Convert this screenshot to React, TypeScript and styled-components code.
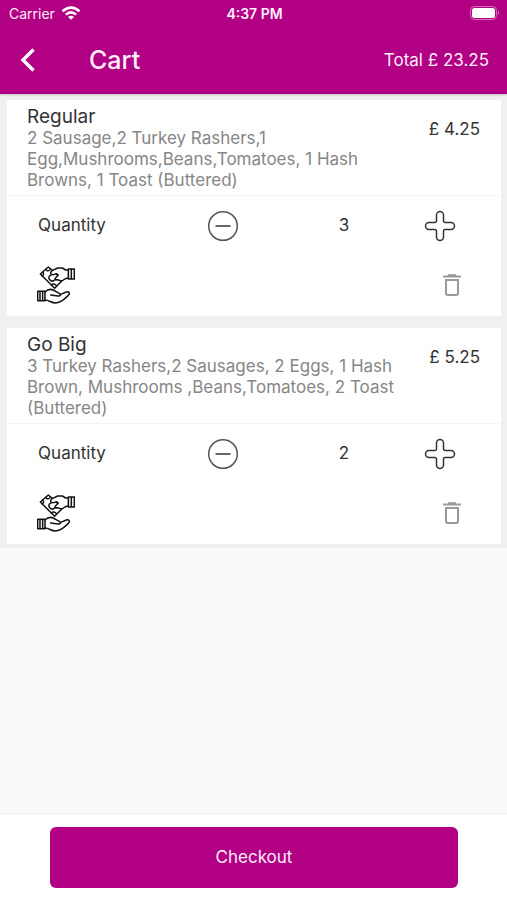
import React, { useState } from "react";
import styled, { createGlobalStyle } from "styled-components";

const brand = "#b10083";

const GlobalStyle = createGlobalStyle`
  * { box-sizing: border-box; }
  body {
    margin: 0;
    background: #fafafa;
    color: #333;
    font-family: Inter, "Liberation Sans", sans-serif;
    font-size: 17px;
  }
  button { font: inherit; color: inherit; }
`;

const Page = styled.div`
  min-height: 100vh;
  display: flex;
  flex-direction: column;
`;

const Header = styled.header`
  background: ${brand};
  color: #ffeefb;
  position: relative;
  box-shadow: 0 1px 2px rgba(0, 0, 0, 0.2);
`;

const StatusBar = styled.div`
  display: grid;
  grid-template-columns: 1fr auto 1fr;
  align-items: center;
  height: 28px;
  padding: 0 7px 2px 9px;
  font-size: 14px;
`;

const Carrier = styled.span`
  display: flex;
  align-items: center;
  gap: 6px;
`;

const Clock = styled.time`
  font-size: 14px;
  font-weight: 600;
`;

const BatteryIcon = styled.svg`
  justify-self: end;
`;

const NavBar = styled.div`
  display: flex;
  align-items: center;
  height: 66px;
  padding: 0 18px 3px 16px;
`;

const IconButton = styled.button`
  display: flex;
  align-items: center;
  justify-content: center;
  padding: 0;
  border: 0;
  background: none;
  cursor: pointer;
`;

const Title = styled.h1`
  flex: 1;
  margin: 0 0 0 49px;
  font-size: 25px;
  font-weight: 500;
`;

const Total = styled.span`
  font-size: 17px;
`;

const CartList = styled.main`
  display: flex;
  flex-direction: column;
  gap: 12px;
  padding: 6px 6px 4px 7px;
  background: #f0f0f0;
`;

const Card = styled.article`
  background: #fff;
`;

const CardTop = styled.div`
  display: flex;
  justify-content: space-between;
  gap: 16px;
  padding: 6px 21px 4px 20px;
  border-bottom: 1px solid #f4f4f4;
`;

const Details = styled.div`
  flex: 1;
  max-width: 380px;
`;

const ItemName = styled.h2`
  margin: 0;
  font-size: 19px;
  font-weight: 400;
  line-height: 22px;
`;

const Description = styled.p`
  margin: 0;
  color: #868686;
  font-size: 17px;
  line-height: 21px;
`;

const Price = styled.span`
  padding-top: 13px;
  line-height: 21px;
`;

const QuantityRow = styled.div`
  display: grid;
  grid-template-columns: 130fr 172fr 70fr 122fr;
  align-items: center;
  height: 61px;
  padding-bottom: 1px;
`;

const QuantityCell = styled.span`
  text-align: center;
  padding-bottom: 2px;
`;

const QuantityButton = styled(IconButton)`
  justify-self: center;
`;

const ActionRow = styled.div`
  display: flex;
  align-items: center;
  justify-content: space-between;
  height: 59px;
  padding: 0 40px 4px 30px;
`;

const Footer = styled.footer`
  margin-top: auto;
  padding: 13px 49px 12px 50px;
  border-top: 1px solid #f0f0f0;
  background: #fff;
`;

const Checkout = styled.button`
  display: block;
  width: 100%;
  height: 61px;
  padding: 0 0 2px;
  border: 0;
  border-radius: 6px;
  background: ${brand};
  color: #ffeefb;
  font-size: 17px;
  cursor: pointer;
`;

const WifiIcon = () => (
  <svg width="20" height="14" viewBox="0 0 20 14" fill="none" stroke="#fff" strokeWidth="2.600" aria-hidden="true">
    <path d="M1.500 5.300Q10-2 18.500 5.300M4.800 8.600Q10 4 15.200 8.600" />
    <path d="M7 11Q10 8.500 13 11L10 13.800Z" fill="#fff" stroke="none" />
  </svg>
);

const Battery = () => (
  <BatteryIcon width="30" height="14" viewBox="0 0 30 14" fill="none" aria-label="Battery full">
    <rect x=".5" y=".5" width="26" height="13" rx="4" stroke="#d070b8" />
    <rect x="2" y="2" width="23" height="10" rx="2.500" fill="#fff" />
    <path d="M28 5q2 2 0 4z" fill="#dc8bc8" />
  </BatteryIcon>
);

const BackIcon = () => (
  <svg width="24" height="28" viewBox="0 0 24 28" fill="none" stroke="#fff" strokeWidth="3.400" aria-hidden="true">
    <path d="M17.500 3.500 7 14l10.500 10.500" />
  </svg>
);

const MinusIcon = () => (
  <svg width="32" height="32" viewBox="0 0 32 32" fill="none" stroke="#555" aria-hidden="true">
    <circle cx="16" cy="16" r="14.300" strokeWidth="1.500" />
    <path d="M8.500 16h15" strokeWidth="1.800" />
  </svg>
);

const PlusIcon = () => (
  <svg width="32" height="32" viewBox="0 0 32 32" fill="none" stroke="#333" strokeWidth="1.500" aria-hidden="true">
    <path d="M12.500 5a3.500 3.500 0 0 1 7 0v6a1.500 1.500 0 0 0 1.500 1.500h6a3.500 3.500 0 0 1 0 7h-6a1.500 1.500 0 0 0-1.500 1.500v6a3.500 3.500 0 0 1-7 0v-6a1.500 1.500 0 0 0-1.500-1.500H5a3.500 3.500 0 0 1 0-7h6a1.500 1.500 0 0 0 1.500-1.500z" />
  </svg>
);

const TrashIcon = () => (
  <svg width="18" height="24" viewBox="0 0 18 24" fill="none" stroke="#999" strokeWidth="2" aria-hidden="true">
    <path d="M0 3.500h18" />
    <path d="M5 2.200h8" />
    <path d="M3 7h12v13a2 2 0 0 1-2 2H5a2 2 0 0 1-2-2z" />
  </svg>
);

const CashIcon = () => (
  <svg
    width="38"
    height="38"
    viewBox="50 34 114 114"
    fill="none"
    stroke="#111"
    strokeWidth="4.500"
    strokeLinejoin="round"
    strokeLinecap="round"
    aria-hidden="true"
  >
    <path d="M144 43h18v30h-18zM153 43v30" />
    <path d="m84 37-24 21 43 43 24-25-31-29z" />
    <path d="M76 44c2 5 7 6 12 2M67 52c4 4 3 9-1 12M93 91c5-5 10-4 14 1" />
    <path
      fill="#fff"
      d="M144 46h-8l-10-6h-14L97 47c-7 4-8 9-3 12 4 2 8 1 14-2l6 4-8 8c-4 4 0 8 5 6l6 2c5 2 8 2 12-1 5-4 9-6 15-6z"
    />
    <path d="M92 61c-8 3-8 10-3 15 4 4 10 4 15-1" />
    <path d="M52 110h22v28H52zM59 110v28M67 110v28" />
    <path d="M74 112c9-9 21-10 32-2l11 6c6 4 3 9-4 8l-22-3M119 120l19-8c8-2 13 4 6 10-15 14-23 22-38 23-14 0-19-9-32-9" />
  </svg>
);

type Item = { id: number; name: string; description: string; price: string; quantity: number };

const initialItems: Item[] = [
  {
    id: 1,
    name: "Regular",
    description: "2 Sausage,2 Turkey Rashers,1 Egg,Mushrooms,Beans,Tomatoes, 1 Hash Browns, 1 Toast (Buttered)",
    price: "£ 4.25",
    quantity: 3,
  },
  {
    id: 2,
    name: "Go Big",
    description: "3 Turkey Rashers,2 Sausages, 2 Eggs, 1 Hash Brown, Mushrooms ,Beans,Tomatoes, 2 Toast (Buttered)",
    price: "£ 5.25",
    quantity: 2,
  },
];

export default function App() {
  const [items, setItems] = useState(initialItems);

  const change = (id: number, delta: number) =>
    setItems((list) =>
      list.map((item) => (item.id === id ? { ...item, quantity: Math.max(1, item.quantity + delta) } : item))
    );
  const remove = (id: number) => setItems((list) => list.filter((item) => item.id !== id));

  return (
    <Page>
      <GlobalStyle />
      <Header>
        <StatusBar>
          <Carrier>
            Carrier <WifiIcon />
          </Carrier>
          <Clock>4:37 PM</Clock>
          <Battery />
        </StatusBar>
        <NavBar>
          <IconButton type="button" aria-label="Back">
            <BackIcon />
          </IconButton>
          <Title>Cart</Title>
          <Total>Total £ 23.25</Total>
        </NavBar>
      </Header>
      <CartList>
        {items.map((item) => (
          <Card key={item.id}>
            <CardTop>
              <Details>
                <ItemName>{item.name}</ItemName>
                <Description>{item.description}</Description>
              </Details>
              <Price>{item.price}</Price>
            </CardTop>
            <QuantityRow>
              <QuantityCell>Quantity</QuantityCell>
              <QuantityButton type="button" aria-label="Decrease quantity" onClick={() => change(item.id, -1)}>
                <MinusIcon />
              </QuantityButton>
              <QuantityCell>{item.quantity}</QuantityCell>
              <QuantityButton type="button" aria-label="Increase quantity" onClick={() => change(item.id, 1)}>
                <PlusIcon />
              </QuantityButton>
            </QuantityRow>
            <ActionRow>
              <IconButton type="button" aria-label="Pay with cash">
                <CashIcon />
              </IconButton>
              <IconButton type="button" aria-label="Remove item" onClick={() => remove(item.id)}>
                <TrashIcon />
              </IconButton>
            </ActionRow>
          </Card>
        ))}
      </CartList>
      <Footer>
        <Checkout type="button">Checkout</Checkout>
      </Footer>
    </Page>
  );
}
